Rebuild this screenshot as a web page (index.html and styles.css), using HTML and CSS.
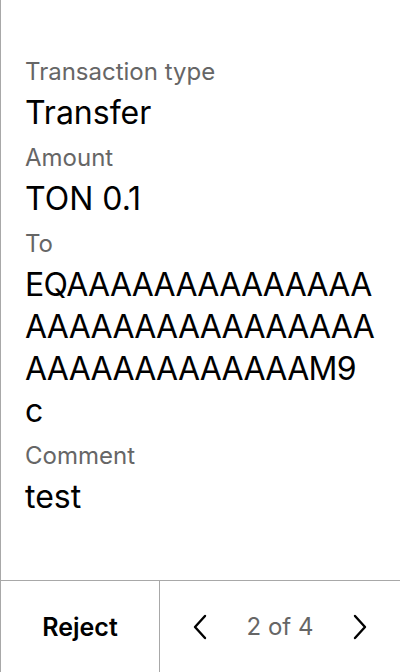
FILE: index.html
```html
<!DOCTYPE html>
<html>
<head>
<meta charset="utf-8">
<link rel="stylesheet" href="styles.css">
</head>
<body>
<div class="screen">
  <main class="content">
    <div class="field">
      <div class="label">Transaction type</div>
      <div class="value">Transfer</div>
    </div>
    <div class="field">
      <div class="label">Amount</div>
      <div class="value">TON 0.1</div>
    </div>
    <div class="field">
      <div class="label">To</div>
      <div class="value address">EQAAAAAAAAAAAAAAAAAAAAAAAAAAAAAAAAAAAAAAAAAAAM9<br>c</div>
    </div>
    <div class="field">
      <div class="label">Comment</div>
      <div class="value">test</div>
    </div>
  </main>
  <footer class="footer">
    <button class="reject">Reject</button>
    <div class="pager">
      <button class="nav" aria-label="Previous">
        <svg width="20" height="28" viewBox="0 0 20 28"><path d="M15 3 L5 14 L15 25" fill="none" stroke="#000" stroke-width="2.4" stroke-linecap="round" stroke-linejoin="round"/></svg>
      </button>
      <span class="count">2 of 4</span>
      <button class="nav" aria-label="Next">
        <svg width="20" height="28" viewBox="0 0 20 28"><path d="M5 3 L15 14 L5 25" fill="none" stroke="#000" stroke-width="2.4" stroke-linecap="round" stroke-linejoin="round"/></svg>
      </button>
    </div>
  </footer>
</div>
</body>
</html>
```
FILE: styles.css
```css
* { box-sizing: border-box; }
html, body { margin: 0; padding: 0; background: #fff; }
body { font-family: Inter, "Noto Sans", sans-serif; color: #000; }
.screen {
  width: 400px;
  height: 672px;
  display: flex;
  flex-direction: column;
  border-left: 1px solid #a8a8a8;
}
.content {
  flex: 1;
  padding: 58px 24px 0 24px;
  display: flex;
  flex-direction: column;
  gap: 10px;
}
.field { display: flex; flex-direction: column; gap: 6px; }
.label { font-size: 24px; line-height: 28px; color: #666; }
.value { font-size: 32px; line-height: 42px; color: #000; }
.address {
  word-break: break-all;
  letter-spacing: -0.7px;
}
.footer {
  height: 92px;
  border-top: 1px solid #a8a8a8;
  display: flex;
}
.reject {
  width: 159px;
  border: none;
  border-right: 1px solid #a8a8a8;
  background: none;
  font-family: inherit;
  font-size: 25px;
  font-weight: 600;
  color: #000;
  padding: 0;
}
.pager {
  flex: 1;
  display: flex;
  align-items: center;
  justify-content: space-between;
  padding: 0 30px 0 30px;
}
.nav { border: none; background: none; padding: 0; display: flex; }
.count { font-size: 24px; color: #666; }
```
